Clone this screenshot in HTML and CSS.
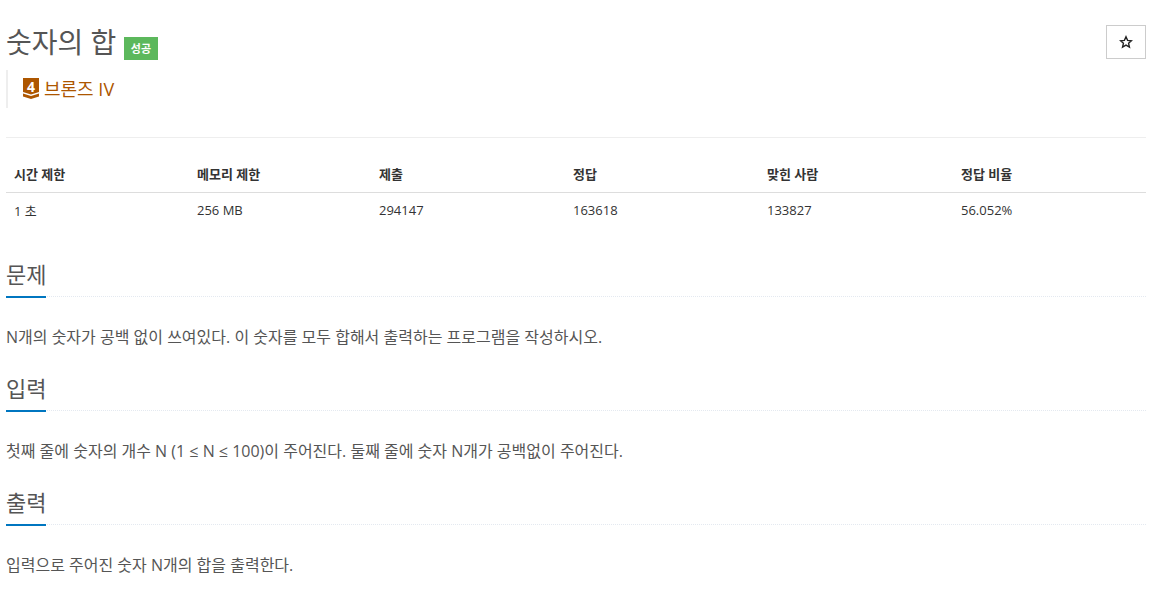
FILE: index.html
```html
<!DOCTYPE html>
<html lang="ko">
<head>
    <title>숫자의 합</title>
    <link rel="stylesheet" href="styles.css">
</head>
<body>
    <div class="container">
        <!-- Title with result badge and star button -->
        <div class="page-header">
            <div class="title-row">
                <h1>숫자의 합</h1>
                <span class="badge">성공</span>
                <button class="star-btn" type="button">
                    <svg width="14" height="14" viewBox="0 0 24 24" fill="none" stroke="#222" stroke-width="2.4" stroke-linejoin="miter">
                        <path d="M12 3l2.7 6.2 6.8.6-5.1 4.5 1.5 6.6L12 17.4l-5.9 3.5 1.5-6.6-5.1-4.5 6.8-.6z"/>
                    </svg>
                </button>
            </div>
            <blockquote class="tier">
                <svg class="tier-icon" width="16" height="21" viewBox="0 0 16 21">
                    <path d="M0 0h16v14l-8 2.5L0 14z" fill="#ad5600"/>
                    <path d="M0 15.5l8 2.5 8-2.5v3L8 21l-8-2.5z" fill="#ad5600"/>
                    <text x="8" y="13.5" text-anchor="middle" class="tier-num">4</text>
                </svg>
                <span>브론즈 IV</span>
            </blockquote>
        </div>

        <!-- Problem stats -->
        <table class="stats">
            <thead>
                <tr>
                    <th class="col-a">시간 제한</th>
                    <th class="col-b">메모리 제한</th>
                    <th>제출</th>
                    <th>정답</th>
                    <th>맞힌 사람</th>
                    <th class="col-f">정답 비율</th>
                </tr>
            </thead>
            <tbody>
                <tr>
                    <td>1 초</td>
                    <td>256 MB</td>
                    <td>294147</td>
                    <td>163618</td>
                    <td>133827</td>
                    <td>56.052%</td>
                </tr>
            </tbody>
        </table>

        <!-- Problem text -->
        <section class="block">
            <div class="headline"><h2>문제</h2></div>
            <p>N개의 숫자가 공백 없이 쓰여있다. 이 숫자를 모두 합해서 출력하는 프로그램을 작성하시오.</p>
        </section>
        <section class="block">
            <div class="headline"><h2>입력</h2></div>
            <p>첫째 줄에 숫자의 개수 N (1 ≤ N ≤ 100)이 주어진다. 둘째 줄에 숫자 N개가 공백없이 주어진다.</p>
        </section>
        <section class="block">
            <div class="headline"><h2>출력</h2></div>
            <p>입력으로 주어진 숫자 N개의 합을 출력한다.</p>
        </section>
    </div>
</body>
</html>
```

FILE: styles.css
```css
/* Basic page styling */
body {
    margin: 0;
    background: #fff;
    color: #555;
    font-family: "Open Sans", "Noto Sans CJK KR", sans-serif;
    font-size: 14px;
}

.container {
    width: 1140px;
    padding: 19px 12px 0 6px;
}

/* Header */
.page-header {
    padding-bottom: 29px;
    border-bottom: 1px solid #eee;
}

.title-row {
    display: flex;
    align-items: flex-start;
}

h1 {
    margin: 0;
    font-size: 28px;
    font-weight: 400;
    line-height: 46px;
    color: #555;
}

.badge {
    margin: 18px 0 0 8px;
    padding: 0 6.5px;
    height: 23px;
    line-height: 23px;
    background: #5cb85c;
    color: #fff;
    font-size: 11px;
    font-weight: 700;
}

.star-btn {
    display: flex;
    align-items: center;
    justify-content: center;
    margin: 6px 0 0 auto;
    padding: 0;
    width: 40px;
    height: 34px;
    background: #fff;
    border: 1px solid #ccc;
}

/* Tier line */
.tier {
    display: flex;
    align-items: center;
    gap: 5px;
    margin: 5px 0 0;
    padding: 0 0 2px 15px;
    height: 36px;
    border-left: 2px solid #eee;
    color: #ad5600;
    font-size: 18px;
}

.tier-icon {
    overflow: visible;
}

.tier-num {
    fill: #fff;
    font-size: 14px;
    font-weight: 700;
}

/* Stats table */
.stats {
    width: 1140px;
    margin: 19px 0 32px;
    border-collapse: collapse;
    table-layout: fixed;
    color: #333;
    font-size: 13px;
}

.stats th {
    width: 194px;
    padding: 7px 8px 9px;
    height: 20px;
    text-align: left;
    font-weight: 700;
    border-bottom: 1px solid #ddd;
    box-sizing: border-box;
}

.stats .col-a {
    width: 183px;
}

.stats .col-b {
    width: 182px;
}

.stats .col-f {
    width: 193px;
}

.stats td {
    padding: 7px 8px 9px;
    height: 20px;
}

/* Sections */
.block {
    margin-top: 26px;
}

.headline {
    border-bottom: 1px dotted #e4e9f0;
}

h2 {
    display: inline-block;
    margin: 0 0 -2px;
    padding-bottom: 8px;
    font-size: 22px;
    font-weight: 400;
    line-height: 27px;
    color: #555;
    border-bottom: 2px solid #0076c0;
}

p {
    margin: 28px 0 0;
    line-height: 24px;
    font-size: 16px;
}
```
